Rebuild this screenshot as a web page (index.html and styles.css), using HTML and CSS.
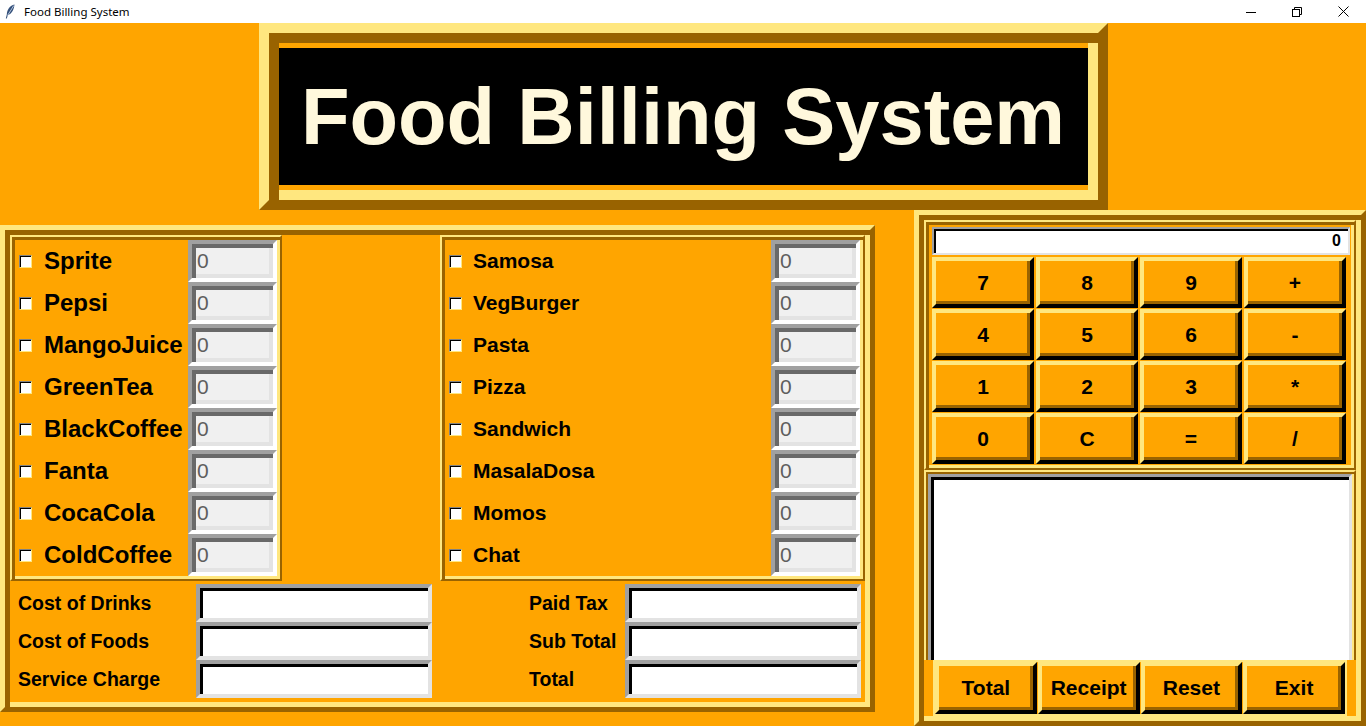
FILE: index.html
```html
<!DOCTYPE html>
<html lang="en">
<head>
    <meta charset="UTF-8">
    <title>Food Billing System</title>
    <link rel="stylesheet" href="styles.css">
</head>
<body>
    <div class="titlebar">
        <svg class="feather" width="10" height="15" viewBox="0 0 10 15">
            <path d="M9.5 0.5 C5 1.5 2 5.5 1.8 10.5 L0.8 14.5 L1.8 14.5 L2.8 11.2 C6.8 10 9 5.5 9.5 0.5 Z" fill="#34507a"/>
            <path d="M8.8 1.5 L2.6 11.4" stroke="#c4d2e8" stroke-width="0.9"/>
        </svg>
        <span class="window-title">Food Billing System</span>
        <div class="win-controls">
            <div class="win-btn">
                <svg width="10" height="10" viewBox="0 0 10 10"><path d="M0 5.5 H10" stroke="#000" stroke-width="1"/></svg>
            </div>
            <div class="win-btn">
                <svg width="10" height="10" viewBox="0 0 10 10" fill="none" stroke="#000" stroke-width="1">
                    <rect x="0.5" y="2.5" width="7" height="7"/>
                    <path d="M2.5 2.5 V0.5 H9.5 V7.5 H7.5"/>
                </svg>
            </div>
            <div class="win-btn">
                <svg width="11" height="11" viewBox="0 0 11 11"><path d="M0.5 0.5 L10.5 10.5 M10.5 0.5 L0.5 10.5" stroke="#000" stroke-width="1"/></svg>
            </div>
        </div>
    </div>

    <div class="header">
        <div class="title-frame">
            <div class="title-label">Food Billing System</div>
        </div>
    </div>

    <div class="main">
        <div class="order-frame ridge">
            <div class="menus">
                <div class="menu drinks thin-ridge">
                    <div class="row"><span class="chk"></span><span class="name">Sprite</span><span class="qty">0</span></div>
                    <div class="row"><span class="chk"></span><span class="name">Pepsi</span><span class="qty">0</span></div>
                    <div class="row"><span class="chk"></span><span class="name">MangoJuice</span><span class="qty">0</span></div>
                    <div class="row"><span class="chk"></span><span class="name">GreenTea</span><span class="qty">0</span></div>
                    <div class="row"><span class="chk"></span><span class="name">BlackCoffee</span><span class="qty">0</span></div>
                    <div class="row"><span class="chk"></span><span class="name">Fanta</span><span class="qty">0</span></div>
                    <div class="row"><span class="chk"></span><span class="name">CocaCola</span><span class="qty">0</span></div>
                    <div class="row"><span class="chk"></span><span class="name">ColdCoffee</span><span class="qty">0</span></div>
                </div>
                <div class="menu foods thin-ridge">
                    <div class="row"><span class="chk"></span><span class="name">Samosa</span><span class="qty">0</span></div>
                    <div class="row"><span class="chk"></span><span class="name">VegBurger</span><span class="qty">0</span></div>
                    <div class="row"><span class="chk"></span><span class="name">Pasta</span><span class="qty">0</span></div>
                    <div class="row"><span class="chk"></span><span class="name">Pizza</span><span class="qty">0</span></div>
                    <div class="row"><span class="chk"></span><span class="name">Sandwich</span><span class="qty">0</span></div>
                    <div class="row"><span class="chk"></span><span class="name">MasalaDosa</span><span class="qty">0</span></div>
                    <div class="row"><span class="chk"></span><span class="name">Momos</span><span class="qty">0</span></div>
                    <div class="row"><span class="chk"></span><span class="name">Chat</span><span class="qty">0</span></div>
                </div>
            </div>
            <div class="costs">
                <span class="cost-label">Cost of Drinks</span><span class="cost-entry"></span>
                <span class="cost-label right">Paid Tax</span><span class="cost-entry"></span>
                <span class="cost-label">Cost of Foods</span><span class="cost-entry"></span>
                <span class="cost-label right">Sub Total</span><span class="cost-entry"></span>
                <span class="cost-label">Service Charge</span><span class="cost-entry"></span>
                <span class="cost-label right">Total</span><span class="cost-entry"></span>
            </div>
        </div>

        <div class="calc-frame ridge">
            <div class="calc thin-ridge">
                <div class="display">0</div>
                <div class="keys">
                    <div class="btn">7</div><div class="btn">8</div><div class="btn">9</div><div class="btn">+</div>
                    <div class="btn">4</div><div class="btn">5</div><div class="btn">6</div><div class="btn">-</div>
                    <div class="btn">1</div><div class="btn">2</div><div class="btn">3</div><div class="btn">*</div>
                    <div class="btn">0</div><div class="btn">C</div><div class="btn">=</div><div class="btn">/</div>
                </div>
            </div>
            <div class="receipt-frame">
                <div class="receipt"></div>
            </div>
            <div class="actions">
                <div class="btn">Total</div>
                <div class="btn">Receipt</div>
                <div class="btn">Reset</div>
                <div class="btn">Exit</div>
            </div>
        </div>
    </div>
</body>
</html>
```

FILE: styles.css
```css
* {
    box-sizing: border-box;
}
body {
    margin: 0;
    width: 1366px;
    height: 726px;
    overflow: hidden;
    background-color: #ffa500; /* tk "orange" */
    font-family: "Liberation Sans", Arial, sans-serif;
    color: #000;
}

/* window title bar */
.titlebar {
    height: 23px;
    background-color: #fff;
    display: flex;
    align-items: center;
    font-family: "Noto Sans", "DejaVu Sans", sans-serif;
    font-size: 11.5px;
}
.feather {
    margin-left: 5px;
}
.window-title {
    margin-left: 9px;
}
.win-controls {
    margin-left: auto;
    display: flex;
    height: 100%;
}
.win-btn {
    width: 46px;
    display: flex;
    align-items: center;
    justify-content: center;
}

/* 3d borders, tk ridge style */
.ridge {
    border: 5px solid;
    border-color: #ffe77f #996300 #996300 #ffe77f;
    box-shadow: inset 5px 5px 0 #996300, inset -5px -5px 0 #ffe77f;
    padding: 5px;
}
.thin-ridge {
    border: 2px solid;
    border-color: #ffe77f #996300 #996300 #ffe77f;
    box-shadow: inset 3px 3px 0 #996300, inset -3px -3px 0 #ffe77f;
    padding: 3px;
}

/* heading */
.header {
    display: flex;
    justify-content: center;
    height: 187px;
}
.title-frame {
    width: 849px;
    height: 187px;
    border: 10px solid;
    border-color: #ffe77f #996300 #996300 #ffe77f;
    box-shadow: inset 10px 10px 0 #996300, inset -10px -10px 0 #ffe77f;
    padding: 15px 10px;
}
.title-label {
    height: 100%;
    background-color: #000;
    color: #fff8dc;
    font-size: 79.5px;
    font-weight: bold;
    display: flex;
    align-items: center;
    justify-content: center;
}

.main {
    display: flex;
    align-items: flex-start;
}

/* order side */
.order-frame {
    margin-top: 15px;
    width: 875px;
    height: 487px;
}
.menus {
    display: flex;
    justify-content: space-between;
    height: 346px;
}
.drinks {
    width: 272px;
}
.foods {
    width: 425px;
}
.row {
    display: flex;
    align-items: center;
    height: 42px;
}
.chk {
    width: 13px;
    height: 13px;
    margin-left: 4px;
    background-color: #fff;
    border: 1px solid;
    border-color: #808080 #ffe77f #ffe77f #808080;
    box-shadow: inset 1px 1px 0 #000;
    flex-shrink: 0;
}
.name {
    font-weight: bold;
}
.drinks .name {
    margin-left: 12px;
    font-size: 24px;
}
.foods .name {
    margin-left: 11px;
    font-size: 21px;
}
.qty {
    margin-left: auto;
    width: 89px;
    height: 42px;
    flex-shrink: 0;
    background-color: #f0f0f0;
    border: 4px solid;
    border-color: #a0a0a0 #fff #fff #a0a0a0;
    box-shadow: inset 4px 4px 0 #696969, inset -4px -4px 0 #e3e3e3;
    padding-left: 5px;
    font-size: 21px;
    line-height: 34px;
    color: #5e5e5e;
}

.costs {
    display: grid;
    grid-template-columns: 186px 236px 193px 236px;
    grid-auto-rows: 38px;
    padding-top: 3px;
}
.cost-label {
    align-self: center;
    padding-left: 8px;
    font-size: 19.5px;
    font-weight: bold;
}
.cost-label.right {
    padding-left: 97px;
}
.cost-entry {
    background-color: #fff;
    border: 4px solid;
    border-color: #a0a0a0 #e3e3e3 #e3e3e3 #a0a0a0;
    box-shadow: inset 3px 3px 0 #000;
}

/* calculator side */
.calc-frame {
    margin-left: 39px;
    width: 452px;
    height: 516px;
    display: flex;
    flex-direction: column;
}
.calc {
    height: 250px;
    padding: 5px 4px 4px 6px;
}
.display {
    height: 28px;
    background-color: #fff;
    border: 2px solid;
    border-color: #a0a0a0 #e3e3e3 #e3e3e3 #a0a0a0;
    box-shadow: inset 2px 2px 0 #000;
    text-align: right;
    padding-right: 7px;
    font-size: 16px;
    font-weight: bold;
    line-height: 24px;
}
.keys {
    margin-top: 2px;
    display: grid;
    grid-template-columns: repeat(4, 102px);
    grid-auto-rows: 51px;
    gap: 1px 2px;
}
.btn {
    background-color: #ffa500;
    border: 4px solid;
    border-color: #ffe77f #000 #000 #ffe77f;
    box-shadow: inset -3px -3px 0 #996300;
    display: flex;
    align-items: center;
    justify-content: center;
    font-size: 21px;
    font-weight: bold;
}
.receipt-frame {
    height: 190px;
    border: 2px solid;
    border-bottom: none;
    border-color: #ffe77f #996300 #996300 #ffe77f;
    box-shadow: inset 2px 2px 0 #996300, inset -2px 0 0 #ffe77f;
    padding: 2px 2px 0 2px;
}
.receipt {
    height: 100%;
    background-color: #fff;
    border: 3px solid;
    border-bottom: none;
    border-color: #a0a0a0 #e3e3e3 #e3e3e3 #a0a0a0;
    box-shadow: inset 3px 3px 0 #000;
}
.actions {
    flex: 1;
    margin: 0 9px 0 9px;
    border: 2px solid #ffe77f;
    display: grid;
    grid-template-columns: repeat(4, 1fr);
    gap: 1px;
}
```
